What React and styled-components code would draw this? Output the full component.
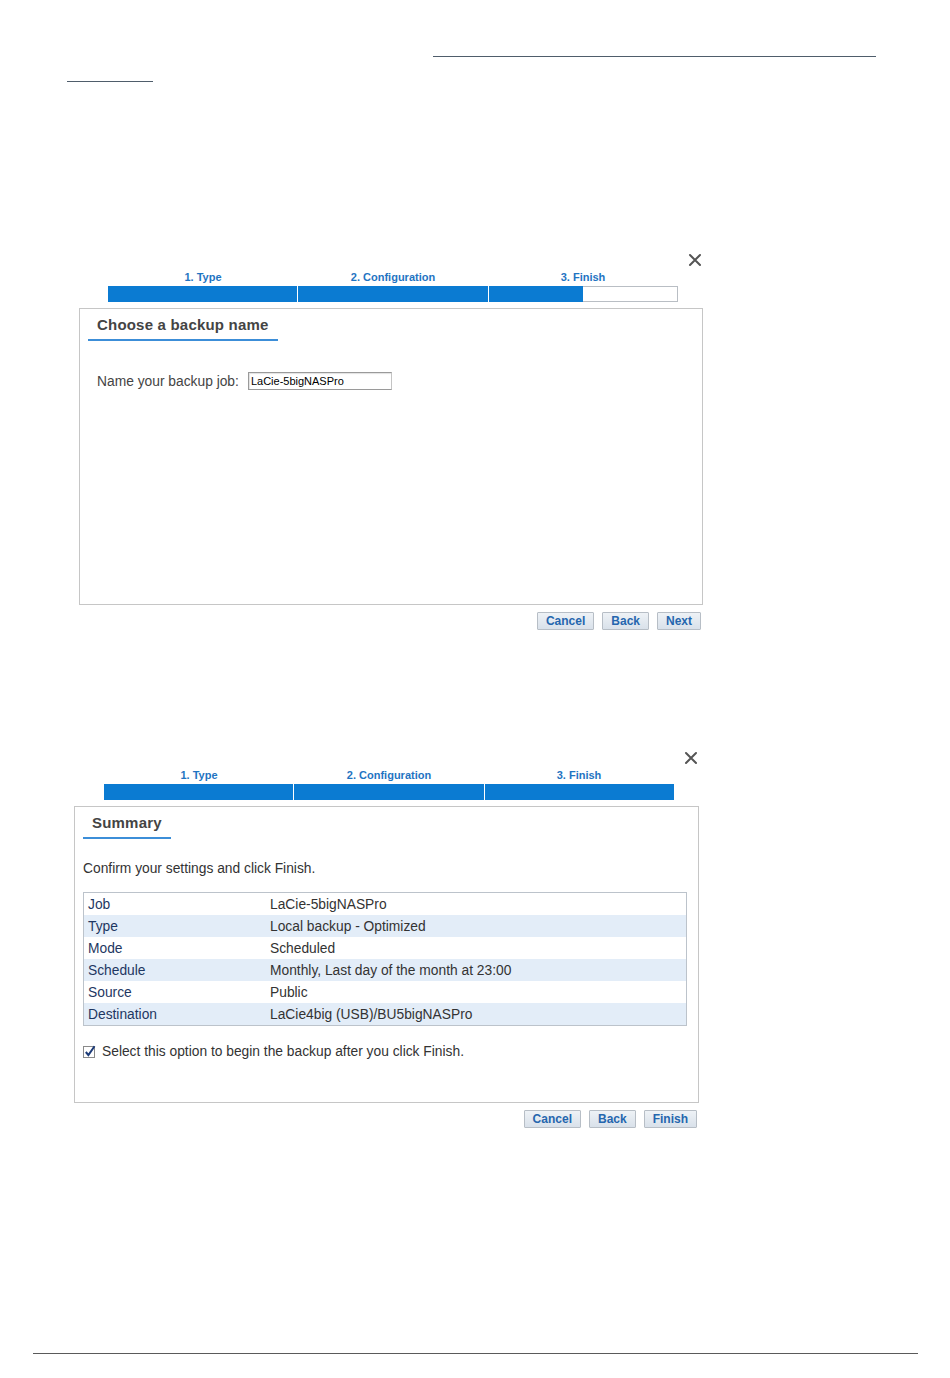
import styled, { createGlobalStyle } from 'styled-components';

const GlobalStyle = createGlobalStyle`
  body {
    margin: 0;
    background: #ffffff;
    font-family: 'Liberation Sans', Arial, sans-serif;
  }
`;

const steps = ['1. Type', '2. Configuration', '3. Finish'];

const summary = [
  ['Job', 'LaCie-5bigNASPro'],
  ['Type', 'Local backup - Optimized'],
  ['Mode', 'Scheduled'],
  ['Schedule', 'Monthly, Last day of the month at 23:00'],
  ['Source', 'Public'],
  ['Destination', 'LaCie4big (USB)/BU5bigNASPro'],
];

const CloseIcon = () => (
  <svg width="14" height="14" viewBox="0 0 14 14">
    <path d="M2 2 L12 12 M12 2 L2 12" stroke="#555" strokeWidth="2" strokeLinecap="round" />
  </svg>
);

const CheckIcon = () => (
  <svg width="13" height="13" viewBox="0 0 13 13">
    <rect x="0.5" y="1.5" width="11" height="11" fill="#fff" stroke="#8a8a8a" />
    <path d="M2.8 7 L5.4 10 L11.5 1.2" fill="none" stroke="#1d3b78" strokeWidth="2" />
  </svg>
);

const Wizard = ({ left, width, barLeft, progress, children, buttons }) => (
  <WizardBox $left={left} $width={width}>
    <CloseRow>
      <CloseIcon />
    </CloseRow>
    <Steps $left={barLeft}>
      {steps.map((s) => (
        <StepLabel key={s}>{s}</StepLabel>
      ))}
    </Steps>
    <Bar $left={barLeft}>
      {progress.map((p, i) => (
        <Segment key={i}>
          <Fill $fill={p} />
        </Segment>
      ))}
    </Bar>
    <Panel>{children}</Panel>
    <Buttons>
      {buttons.map((b) => (
        <Button key={b}>{b}</Button>
      ))}
    </Buttons>
  </WizardBox>
);

const App = () => {
  return (
    <Page>
      <GlobalStyle />
      <LinkLine $left={433} $width={443} $top={56} />
      <LinkLine $left={67} $width={86} $top={24} />

      <Spacer $h={170} />

      <Wizard left={79} width={624} barLeft={29} progress={[100, 100, 50]} buttons={['Cancel', 'Back', 'Next']}>
        <TitleTab>Choose a backup name</TitleTab>
        <FormRow>
          <FieldLabel>Name your backup job:</FieldLabel>
          <NameInput defaultValue="LaCie-5bigNASPro" />
        </FormRow>
      </Wizard>

      <Spacer $h={120} />

      <Wizard left={74} width={625} barLeft={30} progress={[100, 100, 100]} buttons={['Cancel', 'Back', 'Finish']}>
        <TitleTab>Summary</TitleTab>
        <Intro>Confirm your settings and click Finish.</Intro>
        <Table>
          {summary.map(([k, v], i) => (
            <Row key={k} $alt={i % 2 === 1}>
              <Key>{k}</Key>
              <Value>{v}</Value>
            </Row>
          ))}
        </Table>
        <CheckRow>
          <CheckIcon />
          <span>Select this option to begin the backup after you click Finish.</span>
        </CheckRow>
      </Wizard>

      <Footer />
    </Page>
  );
};

const Page = styled.div`
  width: 950px;
  height: 1378px;
  display: flex;
  flex-direction: column;
  overflow: hidden;
`;

const LinkLine = styled.div`
  margin-left: ${(p) => p.$left}px;
  margin-top: ${(p) => p.$top}px;
  width: ${(p) => p.$width}px;
  height: 0;
  border-bottom: 1.5px solid #4f5d6b;
`;

const Spacer = styled.div`
  height: ${(p) => p.$h}px;
  flex: none;
`;

const WizardBox = styled.div`
  margin-left: ${(p) => p.$left}px;
  width: ${(p) => p.$width}px;
  display: flex;
  flex-direction: column;
`;

const CloseRow = styled.div`
  height: 16px;
  display: flex;
  justify-content: flex-end;
  align-items: center;
  padding-right: 1px;
`;

const Steps = styled.div`
  margin: 2px 0 0 ${(p) => p.$left}px;
  width: 570px;
  display: grid;
  grid-template-columns: repeat(3, 1fr);
`;

const StepLabel = styled.div`
  text-align: center;
  font-size: 11px;
  line-height: 14px;
  font-weight: bold;
  color: #1f74c2;
`;

const Bar = styled.div`
  margin: 2px 0 0 ${(p) => p.$left}px;
  width: 570px;
  height: 16px;
  display: grid;
  grid-template-columns: repeat(3, 1fr);
  column-gap: 1px;
`;

const Segment = styled.div`
  background: #ffffff;
  box-shadow: inset 0 0 0 1px #b9bec4;
  display: flex;
`;

const Fill = styled.div`
  width: ${(p) => p.$fill}%;
  height: 100%;
  background: #0b7bd2;
`;

const Panel = styled.div`
  margin-top: 6px;
  height: 297px;
  box-sizing: border-box;
  border: 1px solid #c6c6c6;
  padding: 0 8px;
  display: flex;
  flex-direction: column;
  align-items: flex-start;
`;

const TitleTab = styled.div`
  padding: 7px 9px 6px;
  border-bottom: 2px solid #3c8ed8;
  font-size: 15px;
  line-height: 17px;
  font-weight: bold;
  letter-spacing: 0.2px;
  color: #444444;
`;

const FormRow = styled.div`
  margin: 31px 0 0 9px;
  display: flex;
  align-items: center;
  gap: 9px;
`;

const FieldLabel = styled.label`
  font-size: 13.8px;
  color: #444444;
`;

const NameInput = styled.input`
  width: 144px;
  height: 18px;
  box-sizing: border-box;
  border: 1px solid #9a9a9a;
  border-right-color: #c4c4c4;
  box-shadow: inset 1px 1px 1px rgba(0, 0, 0, 0.12);
  padding: 0 2px;
  font-family: 'Liberation Sans', Arial, sans-serif;
  font-size: 11px;
  color: #000000;
  outline: none;
`;

const Intro = styled.div`
  margin-top: 22px;
  font-size: 13.8px;
  line-height: 16px;
  color: #333333;
`;

const Table = styled.div`
  margin-top: 15px;
  width: 602px;
  border: 1px solid #bcc3cb;
  display: flex;
  flex-direction: column;
`;

const Row = styled.div`
  height: 22px;
  display: grid;
  grid-template-columns: 186px 1fr;
  align-items: center;
  background: ${(p) => (p.$alt ? '#e3edf8' : '#ffffff')};
  font-size: 13.8px;
`;

const Key = styled.span`
  padding-left: 4px;
  color: #1e3762;
`;

const Value = styled.span`
  color: #333333;
`;

const CheckRow = styled.div`
  margin-top: 18px;
  display: flex;
  align-items: center;
  gap: 6px;
  font-size: 13.8px;
  color: #333333;
`;

const Buttons = styled.div`
  margin-top: 7px;
  padding-right: 2px;
  display: flex;
  justify-content: flex-end;
  gap: 8px;
`;

const Button = styled.button`
  height: 18px;
  padding: 0 8px;
  border: 1px solid #b7bec6;
  border-radius: 1px;
  background: linear-gradient(#eef2f6, #d9e1ea);
  font-family: 'Liberation Sans', Arial, sans-serif;
  font-size: 12px;
  font-weight: bold;
  color: #2566ae;
  line-height: 16px;
  cursor: pointer;
`;

const Footer = styled.div`
  margin: auto 32px 24px 33px;
  height: 0;
  border-bottom: 1.5px solid #5a5a5a;
`;

export default App;
